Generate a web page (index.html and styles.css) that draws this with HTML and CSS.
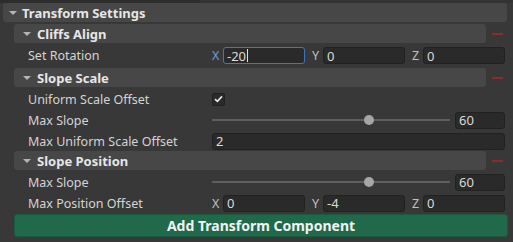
FILE: index.html
```html
<!DOCTYPE html>
<html>
<head>
<meta charset="utf-8">
<link rel="stylesheet" href="styles.css">
</head>
<body>
<div class="topbar"><div class="topbar-left"></div><div class="topbar-right"></div></div>
<div class="panel">
  <div class="foldout main"><span class="arrow"></span><span class="title">Transform Settings</span></div>

  <div class="section">
    <div class="sec-head">
      <div class="foldout sub"><span class="arrow"></span><span class="title">Cliffs Align</span></div>
      <span class="minus"></span>
    </div>
    <div class="rows">
      <div class="row vrow">
        <span class="label">Set Rotation</span>
        <div class="field vec">
          <div class="axis"><span class="ax focus-ax">X</span><div class="input focus">-20<span class="caret"></span></div></div>
          <div class="axis"><span class="ax">Y</span><div class="input">0</div></div>
          <div class="axis"><span class="ax">Z</span><div class="input">0</div></div>
        </div>
      </div>
    </div>
  </div>

  <div class="section">
    <div class="sec-head">
      <div class="foldout sub"><span class="arrow"></span><span class="title">Slope Scale</span></div>
      <span class="minus"></span>
    </div>
    <div class="rows">
      <div class="row">
        <span class="label">Uniform Scale Offset</span>
        <div class="field"><div class="check"><svg width="9" height="8" viewBox="0 0 9 8"><path d="M1 4.2 L3.4 6.4 L8 1.4" fill="none" stroke="#e6e6e6" stroke-width="1.6"/></svg></div></div>
      </div>
      <div class="row">
        <span class="label">Max Slope</span>
        <div class="field slider">
          <div class="track"><div class="thumb" style="left: 66%"></div></div>
          <div class="input num">60</div>
        </div>
      </div>
      <div class="row">
        <span class="label">Max Uniform Scale Offset</span>
        <div class="field"><div class="input wide">2</div></div>
      </div>
    </div>
  </div>

  <div class="section last">
    <div class="sec-head">
      <div class="foldout sub"><span class="arrow"></span><span class="title">Slope Position</span></div>
      <span class="minus"></span>
    </div>
    <div class="rows">
      <div class="row">
        <span class="label">Max Slope</span>
        <div class="field slider">
          <div class="track"><div class="thumb" style="left: 66%"></div></div>
          <div class="input num">60</div>
        </div>
      </div>
      <div class="row">
        <span class="label">Max Position Offset</span>
        <div class="field vec">
          <div class="axis"><span class="ax">X</span><div class="input">0</div></div>
          <div class="axis"><span class="ax">Y</span><div class="input">-4</div></div>
          <div class="axis"><span class="ax">Z</span><div class="input">0</div></div>
        </div>
      </div>
    </div>
  </div>

  <div class="button">Add Transform Component</div>
</div>
</body>
</html>
```
FILE: styles.css
```css
html, body {
  margin: 0;
  padding: 0;
  background: #383838;
  width: 513px;
  height: 242px;
  overflow: hidden;
  font-family: "Noto Sans", "Liberation Sans", sans-serif;
  font-size: 12.5px;
  color: #d2d2d2;
}
.topbar {
  display: flex;
  height: 3px;
}
.topbar-left { width: 200px; background: #2d2d2d; }
.topbar-right { flex: 1; background: #333333; }
.panel {
  display: flex;
  flex-direction: column;
}
.foldout {
  display: flex;
  align-items: center;
  height: 19px;
  background: #474747;
  border-radius: 3px;
  color: #e6e6e6;
  font-weight: bold;
  font-size: 13px;
}
.foldout.main {
  margin: 0 6px 0 3px;
  padding-left: 6px;
}
.foldout.sub {
  width: 472px;
  padding-left: 9px;
  box-sizing: border-box;
}
.arrow {
  width: 0;
  height: 0;
  border-left: 4px solid transparent;
  border-right: 4px solid transparent;
  border-top: 4.5px solid #b4b4b4;
  margin-right: 6px;
}
.foldout.main .arrow { margin-right: 5px; }
.section {
  display: flex;
  flex-direction: column;
  margin-top: 2px;
}
.section.last { margin-top: 0; }
.sec-head {
  display: flex;
  align-items: center;
  padding-left: 14px;
}
.minus {
  width: 11px;
  height: 2px;
  background: #8a2b2f;
  margin-left: 6px;
}
.rows {
  display: flex;
  flex-direction: column;
  gap: 1px;
  padding-top: 2px;
}
.row {
  display: flex;
  align-items: center;
  height: 20px;
  padding-left: 28px;
  padding-right: 8px;
}
.vrow { height: 21px; }
.label {
  width: 184px;
  flex: none;
  color: #d4d4d4;
  white-space: nowrap;
}
.field {
  flex: 1;
  display: flex;
  align-items: center;
}
.vec { gap: 7px; }
.axis {
  flex: 1;
  display: flex;
  align-items: center;
}
.ax {
  width: 11px;
  flex: none;
  color: #c0c0c0;
}
.focus-ax { color: #6f9be0; }
.input {
  flex: 1;
  height: 17px;
  line-height: 16px;
  box-sizing: border-box;
  background: #2a2a2a;
  border: 1px solid #212121;
  border-radius: 3px;
  padding-left: 3px;
  color: #dadada;
  display: flex;
  align-items: center;
  font-size: 13px;
}
.input.focus {
  border-color: #3a79c2;
}
.caret {
  display: inline-block;
  width: 1px;
  height: 13px;
  background: #e0e0e0;
  margin-left: 1px;
}
.check {
  width: 13px;
  height: 13px;
  box-sizing: border-box;
  background: #2a2a2a;
  border: 1px solid #212121;
  border-radius: 2px;
  display: flex;
  align-items: center;
  justify-content: center;
}
.slider { gap: 5px; }
.track {
  flex: 1;
  height: 2px;
  background: #5e5e5e;
  position: relative;
}
.thumb {
  position: absolute;
  top: -4px;
  width: 10px;
  height: 10px;
  margin-left: -5px;
  border-radius: 50%;
  background: #a6a6a6;
}
.input.num {
  flex: none;
  width: 50px;
}
.input.wide { flex: 1; }
.button {
  margin: 1px 5px 0 14px;
  height: 23px;
  box-sizing: border-box;
  background: #20694a;
  border: 1px solid #1a5a3e;
  border-radius: 3px;
  color: #f2f2f2;
  font-weight: bold;
  font-size: 14px;
  display: flex;
  align-items: center;
  justify-content: center;
}
```
